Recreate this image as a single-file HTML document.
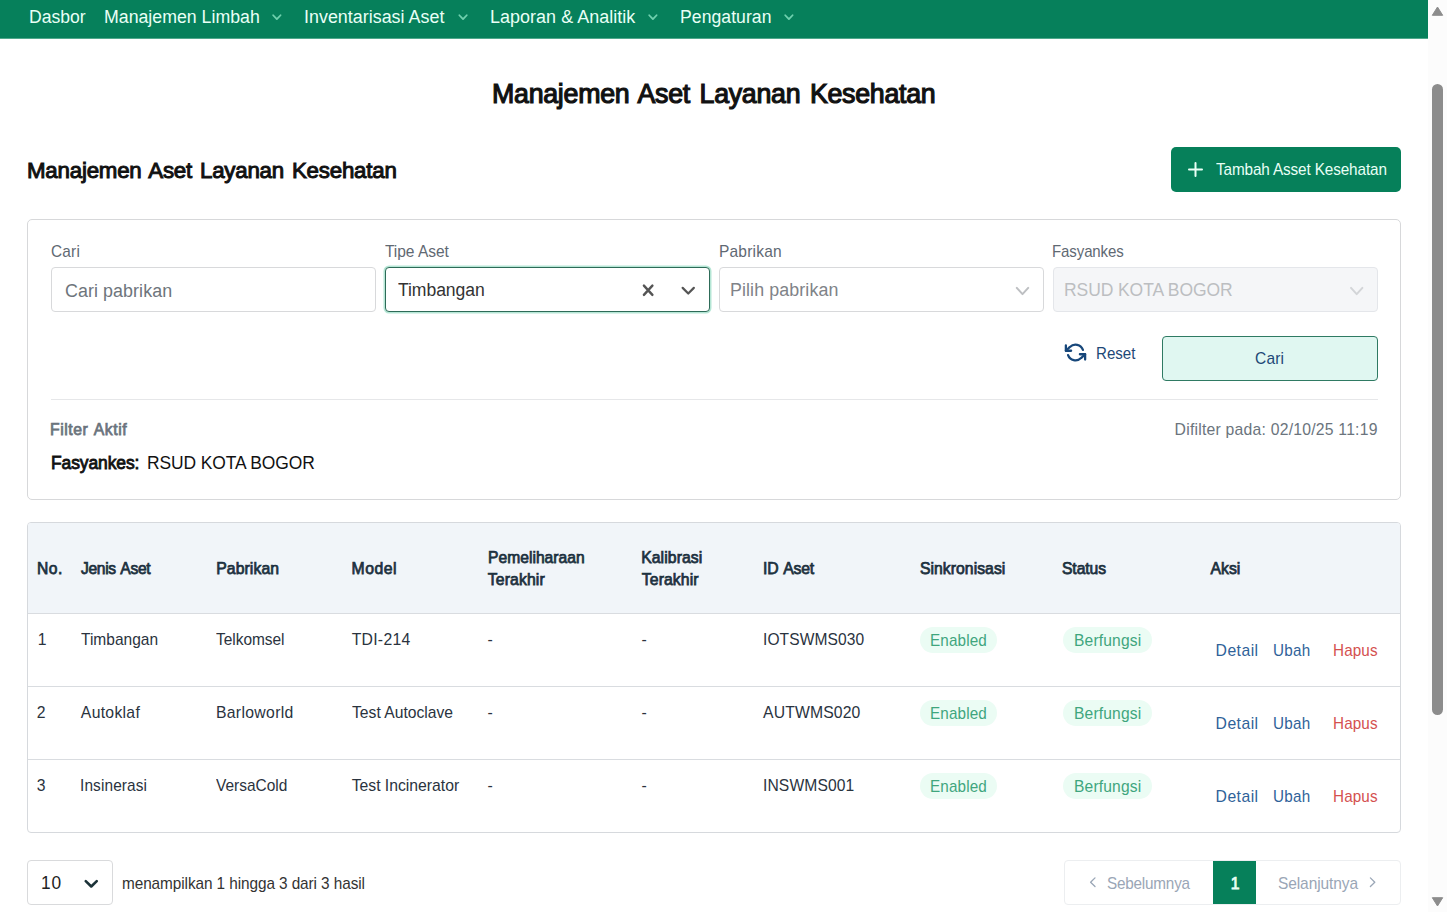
<!DOCTYPE html>
<html lang="id">
<head>
<meta charset="utf-8">
<title>Manajemen Aset Layanan Kesehatan</title>
<style>
*{box-sizing:border-box;}
html,body{margin:0;padding:0;}
body{width:1447px;height:912px;overflow:hidden;background:#fff;font-family:"Liberation Sans",sans-serif;font-size:15.75px;color:#222;position:relative;}
.t{position:absolute;white-space:nowrap;line-height:1;margin:0;font-weight:400;}
.b{position:absolute;}
svg{position:absolute;overflow:visible;}
nav{position:absolute;left:0;top:0;width:1428px;height:39px;background:#06805b;border-bottom:1px solid #4fa88c;}
.sb{position:absolute;left:1428px;top:0;width:19px;height:912px;background:#fcfcfc;}
.thumb{position:absolute;left:4px;top:84px;width:11px;height:631px;border-radius:5.5px;background:#8c8c8c;}
.btn-add{position:absolute;left:1171px;top:147px;width:230px;height:45px;background:#06805a;border-radius:5px;border:0;padding:0;}
.card{position:absolute;left:27px;top:219px;width:1374px;height:281px;border:1px solid #d7d8da;border-radius:5px;background:#fff;}
.inp{position:absolute;top:267px;height:45px;width:325px;border:1px solid #d8d9db;border-radius:4px;background:#fff;}
.inp.focus{border-color:#2e6b58;box-shadow:0 0 0 1.5px #b5e6d5;}
.inp.dis{background:#f5f6f8;border-color:#e4e6ea;}
.btn-cari{position:absolute;left:1162px;top:336px;width:216px;height:45px;background:#e0f7f1;border:1px solid #2f7a63;border-radius:4px;padding:0;}
.hr{position:absolute;left:51px;top:399px;width:1327px;height:1px;background:#e6e7e9;}
.tbl{position:absolute;left:27px;top:522px;width:1374px;height:311px;border:1px solid #d6d9dd;border-radius:4px;background:#fff;overflow:hidden;}
.thead{position:absolute;left:0;top:0;width:100%;height:91px;background:#f1f5f9;border-bottom:1px solid #d9dce0;}
.rl{position:absolute;left:0;width:100%;height:1px;background:#d9dce0;}
.badge{position:absolute;height:26px;border-radius:13px;background:#ebfcf4;}
.sel{position:absolute;left:27px;top:860px;width:86px;height:45px;border:1px solid #d9dadc;border-radius:4px;background:#fff;}
.pager{position:absolute;left:1064px;top:860px;width:337px;height:45px;border:1px solid #eceef0;border-radius:4px;background:#fff;overflow:hidden;}
.pg1{position:absolute;left:1213px;top:861px;width:43px;height:43px;background:#06805a;}
</style>
</head>
<body>
<nav>
<a class="t" style="left:28.90px;top:7px;font-size:18.0px;line-height:20px;letter-spacing:-0.019px;color:#e9fff6;transform:scaleX(0.977);transform-origin:0 0;">Dasbor</a>
<a class="t" style="left:103.95px;top:7px;font-size:18.0px;line-height:20px;letter-spacing:0.013px;color:#e9fff6;transform:scaleX(0.984);transform-origin:0 0;">Manajemen Limbah</a>
<a class="t" style="left:303.65px;top:7px;font-size:18.0px;line-height:20px;letter-spacing:0.025px;color:#e9fff6;transform:scaleX(0.992);transform-origin:0 0;">Inventarisasi Aset</a>
<a class="t" style="left:489.81px;top:7px;font-size:18.0px;line-height:20px;letter-spacing:0.038px;color:#e9fff6;transform:scaleX(0.997);transform-origin:0 0;">Laporan &amp; Analitik</a>
<a class="t" style="left:680.40px;top:7px;font-size:18.0px;line-height:20px;letter-spacing:0.054px;color:#e9fff6;transform:scaleX(0.978);transform-origin:0 0;">Pengaturan</a>
<svg class="b" style="left:0;top:0" width="1" height="1"><path d="M273.15 15.25 L276.85 19.15 L280.55 15.25" fill="none" stroke="#6fd0ae" stroke-width="1.8" stroke-linecap="round" stroke-linejoin="round"/></svg>
<svg class="b" style="left:0;top:0" width="1" height="1"><path d="M459.35 15.25 L463.05 19.15 L466.75 15.25" fill="none" stroke="#6fd0ae" stroke-width="1.8" stroke-linecap="round" stroke-linejoin="round"/></svg>
<svg class="b" style="left:0;top:0" width="1" height="1"><path d="M649.20 15.25 L652.90 19.15 L656.60 15.25" fill="none" stroke="#6fd0ae" stroke-width="1.8" stroke-linecap="round" stroke-linejoin="round"/></svg>
<svg class="b" style="left:0;top:0" width="1" height="1"><path d="M785.20 15.25 L788.90 19.15 L792.60 15.25" fill="none" stroke="#6fd0ae" stroke-width="1.8" stroke-linecap="round" stroke-linejoin="round"/></svg>
</nav>
<div class="sb"><div class="thumb"></div><svg style="left:0;top:0" width="19" height="912"><path d="M9.5 7 L14.7 15.3 L4.3 15.3 Z" fill="#8c8c8c" stroke="#8c8c8c" stroke-width="1" stroke-linejoin="round"/><path d="M9.5 906 L14.7 897.7 L4.3 897.7 Z" fill="#8c8c8c" stroke="#8c8c8c" stroke-width="1" stroke-linejoin="round"/></svg></div>
<h1 class="t" style="left:491.79px;top:79px;font-size:27.0px;line-height:30px;letter-spacing:-0.271px;color:#111;-webkit-text-stroke:1.18px #111;word-spacing:2.43px;transform:scaleX(0.991);transform-origin:0 0;">Manajemen Aset Layanan Kesehatan</h1>
<h2 class="t" style="left:26.73px;top:158px;font-size:22.5px;line-height:25px;letter-spacing:-0.223px;color:#111;-webkit-text-stroke:1.00px #111;word-spacing:2.02px;transform:scaleX(0.991);transform-origin:0 0;">Manajemen Aset Layanan Kesehatan</h2>
<button class="btn-add"></button>
<svg style="left:1187.7px;top:162px" width="15" height="15" viewBox="0 0 15 15"><path d="M7.5 1v13M1 7.5h13" stroke="#e9fff6" stroke-width="2" stroke-linecap="round" fill="none"/></svg>
<span class="t" style="left:1216.39px;top:161px;font-size:15.75px;line-height:17px;letter-spacing:-0.133px;color:#e9fff6;transform:scaleX(0.972);transform-origin:0 0;">Tambah Asset Kesehatan</span>
<div class="card"></div>
<label class="t" style="left:51.13px;top:243px;font-size:15.75px;line-height:17px;letter-spacing:0.214px;color:#5f6973;transform:scaleX(0.977);transform-origin:0 0;">Cari</label>
<label class="t" style="left:385.31px;top:243px;font-size:15.75px;line-height:17px;letter-spacing:-0.049px;color:#5f6973;transform:scaleX(0.987);transform-origin:0 0;">Tipe Aset</label>
<label class="t" style="left:718.61px;top:243px;font-size:15.75px;line-height:17px;letter-spacing:0.189px;color:#5f6973;transform:scaleX(0.986);transform-origin:0 0;">Pabrikan</label>
<label class="t" style="left:1052.26px;top:243px;font-size:15.75px;line-height:17px;letter-spacing:-0.114px;color:#5f6973;transform:scaleX(0.954);transform-origin:0 0;">Fasyankes</label>
<div class="inp" style="left:51px"></div>
<div class="inp focus" style="left:385px"></div>
<div class="inp" style="left:719px"></div>
<div class="inp dis" style="left:1053px"></div>
<span class="t" style="left:64.57px;top:281px;font-size:18.0px;line-height:20px;letter-spacing:0.066px;color:#6e757c;transform:scaleX(0.993);transform-origin:0 0;">Cari pabrikan</span>
<span class="t" style="left:397.82px;top:280px;font-size:18.0px;line-height:20px;letter-spacing:-0.074px;color:#333;transform:scaleX(0.977);transform-origin:0 0;">Timbangan</span>
<span class="t" style="left:730.43px;top:280px;font-size:18.0px;line-height:20px;letter-spacing:0.099px;color:#808388;transform:scaleX(0.991);transform-origin:0 0;">Pilih pabrikan</span>
<span class="t" style="left:1063.95px;top:280px;font-size:18.0px;line-height:20px;letter-spacing:-0.096px;color:#bcbec1;transform:scaleX(0.973);transform-origin:0 0;">RSUD KOTA BOGOR</span>
<svg style="left:0;top:0" width="1" height="1"><path d="M643.9 285.6 L652.4 294.9 M652.4 285.6 L643.9 294.9" stroke="#555" stroke-width="2.4" stroke-linecap="round" fill="none"/></svg>
<svg class="b" style="left:0;top:0" width="1" height="1"><path d="M682.65 287.90 L688.25 293.50 L693.85 287.90" fill="none" stroke="#555" stroke-width="2.2" stroke-linecap="round" stroke-linejoin="round"/></svg>
<svg class="b" style="left:0;top:0" width="1" height="1"><path d="M1016.80 287.90 L1022.50 294.10 L1028.20 287.90" fill="none" stroke="#bdbfc2" stroke-width="2" stroke-linecap="round" stroke-linejoin="round"/></svg>
<svg class="b" style="left:0;top:0" width="1" height="1"><path d="M1351.00 287.90 L1356.70 294.10 L1362.40 287.90" fill="none" stroke="#d3d5d8" stroke-width="2" stroke-linecap="round" stroke-linejoin="round"/></svg>
<svg style="left:1065px;top:341.5px" width="21" height="21" viewBox="0 0 24 24" fill="none" stroke="#17477a" stroke-width="2.6" stroke-linecap="round" stroke-linejoin="round"><polyline points="1 4 1 10 7 10"/><polyline points="23 20 23 14 17 14"/><path d="M20.49 9A9 9 0 0 0 5.64 5.64L1 10m22 4l-4.64 4.36A9 9 0 0 1 3.51 15"/></svg>
<span class="t" style="left:1095.59px;top:345px;font-size:15.75px;line-height:17px;letter-spacing:0.011px;color:#1d4877;transform:scaleX(0.957);transform-origin:0 0;">Reset</span>
<button class="btn-cari"></button>
<span class="t" style="left:1255.16px;top:350px;font-size:15.75px;line-height:17px;letter-spacing:0.189px;color:#1d4877;transform:scaleX(0.984);transform-origin:0 0;">Cari</span>
<div class="hr"></div>
<span class="t" style="left:49.99px;top:421px;font-size:15.75px;line-height:17px;letter-spacing:0.549px;color:#6b747d;-webkit-text-stroke:0.75px #6b747d;word-spacing:1.42px;">Filter Aktif</span>
<span class="t" style="left:1174.62px;top:421px;font-size:15.75px;line-height:17px;letter-spacing:0.218px;color:#6b747d;">Difilter pada: 02/10/25 11:19</span>
<span class="t" style="left:50.82px;top:453px;font-size:18.0px;line-height:20px;letter-spacing:-0.086px;color:#111;-webkit-text-stroke:0.83px #111;transform:scaleX(0.969);transform-origin:0 0;">Fasyankes:</span>
<span class="t" style="left:146.86px;top:453px;font-size:18.0px;line-height:20px;letter-spacing:-0.110px;color:#111;transform:scaleX(0.969);transform-origin:0 0;">RSUD KOTA BOGOR</span>
<div class="tbl"><div class="thead"></div><div class="rl" style="top:163px"></div><div class="rl" style="top:236px"></div></div>
<span class="t" style="left:37.46px;top:560px;font-size:15.75px;line-height:17px;letter-spacing:0.517px;color:#1d3140;-webkit-text-stroke:0.75px #1d3140;transform:scaleX(0.992);transform-origin:0 0;">No.</span>
<span class="t" style="left:80.77px;top:560px;font-size:15.75px;line-height:17px;letter-spacing:-0.324px;color:#1d3140;-webkit-text-stroke:0.75px #1d3140;word-spacing:1.42px;transform:scaleX(0.99);transform-origin:0 0;">Jenis Aset</span>
<span class="t" style="left:216.15px;top:560px;font-size:15.75px;line-height:17px;letter-spacing:0.112px;color:#1d3140;-webkit-text-stroke:0.75px #1d3140;">Pabrikan</span>
<span class="t" style="left:351.54px;top:560px;font-size:15.75px;line-height:17px;letter-spacing:0.539px;color:#1d3140;-webkit-text-stroke:0.75px #1d3140;">Model</span>
<span class="t" style="left:487.50px;top:549px;font-size:15.75px;line-height:17px;letter-spacing:0.033px;color:#1d3140;-webkit-text-stroke:0.75px #1d3140;transform:scaleX(0.991);transform-origin:0 0;">Pemeliharaan</span>
<span class="t" style="left:487.84px;top:571px;font-size:15.75px;line-height:17px;letter-spacing:0.121px;color:#1d3140;-webkit-text-stroke:0.75px #1d3140;">Terakhir</span>
<span class="t" style="left:641.15px;top:549px;font-size:15.75px;line-height:17px;letter-spacing:0.094px;color:#1d3140;-webkit-text-stroke:0.75px #1d3140;">Kalibrasi</span>
<span class="t" style="left:641.84px;top:571px;font-size:15.75px;line-height:17px;letter-spacing:0.093px;color:#1d3140;-webkit-text-stroke:0.75px #1d3140;">Terakhir</span>
<span class="t" style="left:763.09px;top:560px;font-size:15.75px;line-height:17px;letter-spacing:-0.189px;color:#1d3140;-webkit-text-stroke:0.75px #1d3140;word-spacing:1.42px;">ID Aset</span>
<span class="t" style="left:919.73px;top:560px;font-size:15.75px;line-height:17px;letter-spacing:0.049px;color:#1d3140;-webkit-text-stroke:0.75px #1d3140;transform:scaleX(0.998);transform-origin:0 0;">Sinkronisasi</span>
<span class="t" style="left:1062.37px;top:560px;font-size:15.75px;line-height:17px;letter-spacing:-0.079px;color:#1d3140;-webkit-text-stroke:0.75px #1d3140;transform:scaleX(0.995);transform-origin:0 0;">Status</span>
<span class="t" style="left:1210.52px;top:560px;font-size:15.75px;line-height:17px;letter-spacing:0.009px;color:#1d3140;-webkit-text-stroke:0.75px #1d3140;">Aksi</span>
<span class="t" style="left:37.66px;top:631px;font-size:15.75px;line-height:17px;letter-spacing:0.000px;color:#2a333e;">1</span>
<span class="t" style="left:80.78px;top:631px;font-size:15.75px;line-height:17px;letter-spacing:0.001px;color:#2a333e;transform:scaleX(0.985);transform-origin:0 0;">Timbangan</span>
<span class="t" style="left:216.28px;top:631px;font-size:15.75px;line-height:17px;letter-spacing:-0.017px;color:#2a333e;transform:scaleX(0.981);transform-origin:0 0;">Telkomsel</span>
<span class="t" style="left:351.67px;top:631px;font-size:15.75px;line-height:17px;letter-spacing:0.282px;color:#2a333e;">TDI-214</span>
<span class="t" style="left:762.90px;top:631px;font-size:15.75px;line-height:17px;letter-spacing:0.083px;color:#2a333e;transform:scaleX(0.988);transform-origin:0 0;">IOTSWMS030</span>
<span class="t" style="left:487.42px;top:631px;font-size:15.75px;line-height:17px;letter-spacing:0.000px;color:#2a333e;">-</span>
<span class="t" style="left:641.60px;top:631px;font-size:15.75px;line-height:17px;letter-spacing:0.000px;color:#2a333e;">-</span>
<span class="badge" style="left:920px;top:627px;width:77.3px"></span>
<span class="badge" style="left:1063.2px;top:627px;width:89px"></span>
<span class="t" style="left:930.26px;top:632px;font-size:15.75px;line-height:17px;letter-spacing:0.132px;color:#3fa67e;transform:scaleX(0.969);transform-origin:0 0;">Enabled</span>
<span class="t" style="left:1073.68px;top:632px;font-size:15.75px;line-height:17px;letter-spacing:0.162px;color:#3fa67e;transform:scaleX(0.99);transform-origin:0 0;">Berfungsi</span>
<a class="t" style="left:1215.58px;top:642px;font-size:15.75px;line-height:17px;letter-spacing:0.455px;color:#2f6299;">Detail</a>
<a class="t" style="left:1273.36px;top:642px;font-size:15.75px;line-height:17px;letter-spacing:0.290px;color:#2f6299;transform:scaleX(0.967);transform-origin:0 0;">Ubah</a>
<a class="t" style="left:1332.54px;top:642px;font-size:15.75px;line-height:17px;letter-spacing:0.125px;color:#d4514f;transform:scaleX(0.968);transform-origin:0 0;">Hapus</a>
<span class="t" style="left:36.72px;top:704px;font-size:15.75px;line-height:17px;letter-spacing:0.000px;color:#2a333e;">2</span>
<span class="t" style="left:80.86px;top:704px;font-size:15.75px;line-height:17px;letter-spacing:0.286px;color:#2a333e;">Autoklaf</span>
<span class="t" style="left:215.89px;top:704px;font-size:15.75px;line-height:17px;letter-spacing:0.344px;color:#2a333e;">Barloworld</span>
<span class="t" style="left:351.78px;top:704px;font-size:15.75px;line-height:17px;letter-spacing:0.010px;color:#2a333e;transform:scaleX(0.994);transform-origin:0 0;">Test Autoclave</span>
<span class="t" style="left:763.11px;top:704px;font-size:15.75px;line-height:17px;letter-spacing:0.116px;color:#2a333e;">AUTWMS020</span>
<span class="t" style="left:487.42px;top:704px;font-size:15.75px;line-height:17px;letter-spacing:0.000px;color:#2a333e;">-</span>
<span class="t" style="left:641.60px;top:704px;font-size:15.75px;line-height:17px;letter-spacing:0.000px;color:#2a333e;">-</span>
<span class="badge" style="left:920px;top:700px;width:77.3px"></span>
<span class="badge" style="left:1063.2px;top:700px;width:89px"></span>
<span class="t" style="left:930.26px;top:705px;font-size:15.75px;line-height:17px;letter-spacing:0.132px;color:#3fa67e;transform:scaleX(0.969);transform-origin:0 0;">Enabled</span>
<span class="t" style="left:1073.68px;top:705px;font-size:15.75px;line-height:17px;letter-spacing:0.162px;color:#3fa67e;transform:scaleX(0.99);transform-origin:0 0;">Berfungsi</span>
<a class="t" style="left:1215.58px;top:715px;font-size:15.75px;line-height:17px;letter-spacing:0.455px;color:#2f6299;">Detail</a>
<a class="t" style="left:1273.36px;top:715px;font-size:15.75px;line-height:17px;letter-spacing:0.290px;color:#2f6299;transform:scaleX(0.967);transform-origin:0 0;">Ubah</a>
<a class="t" style="left:1332.54px;top:715px;font-size:15.75px;line-height:17px;letter-spacing:0.125px;color:#d4514f;transform:scaleX(0.968);transform-origin:0 0;">Hapus</a>
<span class="t" style="left:36.73px;top:777px;font-size:15.75px;line-height:17px;letter-spacing:0.000px;color:#2a333e;">3</span>
<span class="t" style="left:80.42px;top:777px;font-size:15.75px;line-height:17px;letter-spacing:0.118px;color:#2a333e;transform:scaleX(0.979);transform-origin:0 0;">Insinerasi</span>
<span class="t" style="left:216.40px;top:777px;font-size:15.75px;line-height:17px;letter-spacing:-0.016px;color:#2a333e;transform:scaleX(0.982);transform-origin:0 0;">VersaCold</span>
<span class="t" style="left:351.67px;top:777px;font-size:15.75px;line-height:17px;letter-spacing:-0.010px;color:#2a333e;">Test Incinerator</span>
<span class="t" style="left:762.90px;top:777px;font-size:15.75px;line-height:17px;letter-spacing:0.105px;color:#2a333e;transform:scaleX(0.993);transform-origin:0 0;">INSWMS001</span>
<span class="t" style="left:487.42px;top:777px;font-size:15.75px;line-height:17px;letter-spacing:0.000px;color:#2a333e;">-</span>
<span class="t" style="left:641.60px;top:777px;font-size:15.75px;line-height:17px;letter-spacing:0.000px;color:#2a333e;">-</span>
<span class="badge" style="left:920px;top:773px;width:77.3px"></span>
<span class="badge" style="left:1063.2px;top:773px;width:89px"></span>
<span class="t" style="left:930.26px;top:778px;font-size:15.75px;line-height:17px;letter-spacing:0.132px;color:#3fa67e;transform:scaleX(0.969);transform-origin:0 0;">Enabled</span>
<span class="t" style="left:1073.68px;top:778px;font-size:15.75px;line-height:17px;letter-spacing:0.162px;color:#3fa67e;transform:scaleX(0.99);transform-origin:0 0;">Berfungsi</span>
<a class="t" style="left:1215.58px;top:788px;font-size:15.75px;line-height:17px;letter-spacing:0.455px;color:#2f6299;">Detail</a>
<a class="t" style="left:1273.36px;top:788px;font-size:15.75px;line-height:17px;letter-spacing:0.290px;color:#2f6299;transform:scaleX(0.967);transform-origin:0 0;">Ubah</a>
<a class="t" style="left:1332.54px;top:788px;font-size:15.75px;line-height:17px;letter-spacing:0.125px;color:#d4514f;transform:scaleX(0.968);transform-origin:0 0;">Hapus</a>
<div class="sel"></div>
<span class="t" style="left:40.53px;top:873px;font-size:18.0px;line-height:20px;letter-spacing:1.039px;color:#222;transform:scaleX(0.961);transform-origin:0 0;">10</span>
<svg class="b" style="left:0;top:0" width="1" height="1"><path d="M85.75 881.10 L91.25 886.50 L96.75 881.10" fill="none" stroke="#1c3238" stroke-width="2.6" stroke-linecap="round" stroke-linejoin="round"/></svg>
<span class="t" style="left:122.30px;top:875px;font-size:15.75px;line-height:17px;letter-spacing:-0.086px;color:#333;transform:scaleX(0.975);transform-origin:0 0;">menampilkan 1 hingga 3 dari 3 hasil</span>
<div class="pager"></div><div class="pg1"></div>
<span class="t" style="left:1106.58px;top:875px;font-size:15.75px;line-height:17px;letter-spacing:-0.215px;color:#9aa6b6;transform:scaleX(0.97);transform-origin:0 0;">Sebelumnya</span>
<span class="t" style="left:1277.58px;top:875px;font-size:15.75px;line-height:17px;letter-spacing:-0.093px;color:#9aa6b6;transform:scaleX(0.984);transform-origin:0 0;">Selanjutnya</span>
<span class="t" style="left:1230.78px;top:875px;font-size:15.75px;line-height:17px;letter-spacing:0.000px;color:#e9fff6;-webkit-text-stroke:0.75px #e9fff6;">1</span>
<svg style="left:0;top:0" width="1" height="1"><path d="M1095 877.9 L1090.6 882.2 L1095 886.5" fill="none" stroke="#9aa6b6" stroke-width="1.3" stroke-linecap="round" stroke-linejoin="round"/><path d="M1370.4 877.9 L1374.8 882.2 L1370.4 886.5" fill="none" stroke="#9aa6b6" stroke-width="1.3" stroke-linecap="round" stroke-linejoin="round"/></svg>
</body>
</html>
